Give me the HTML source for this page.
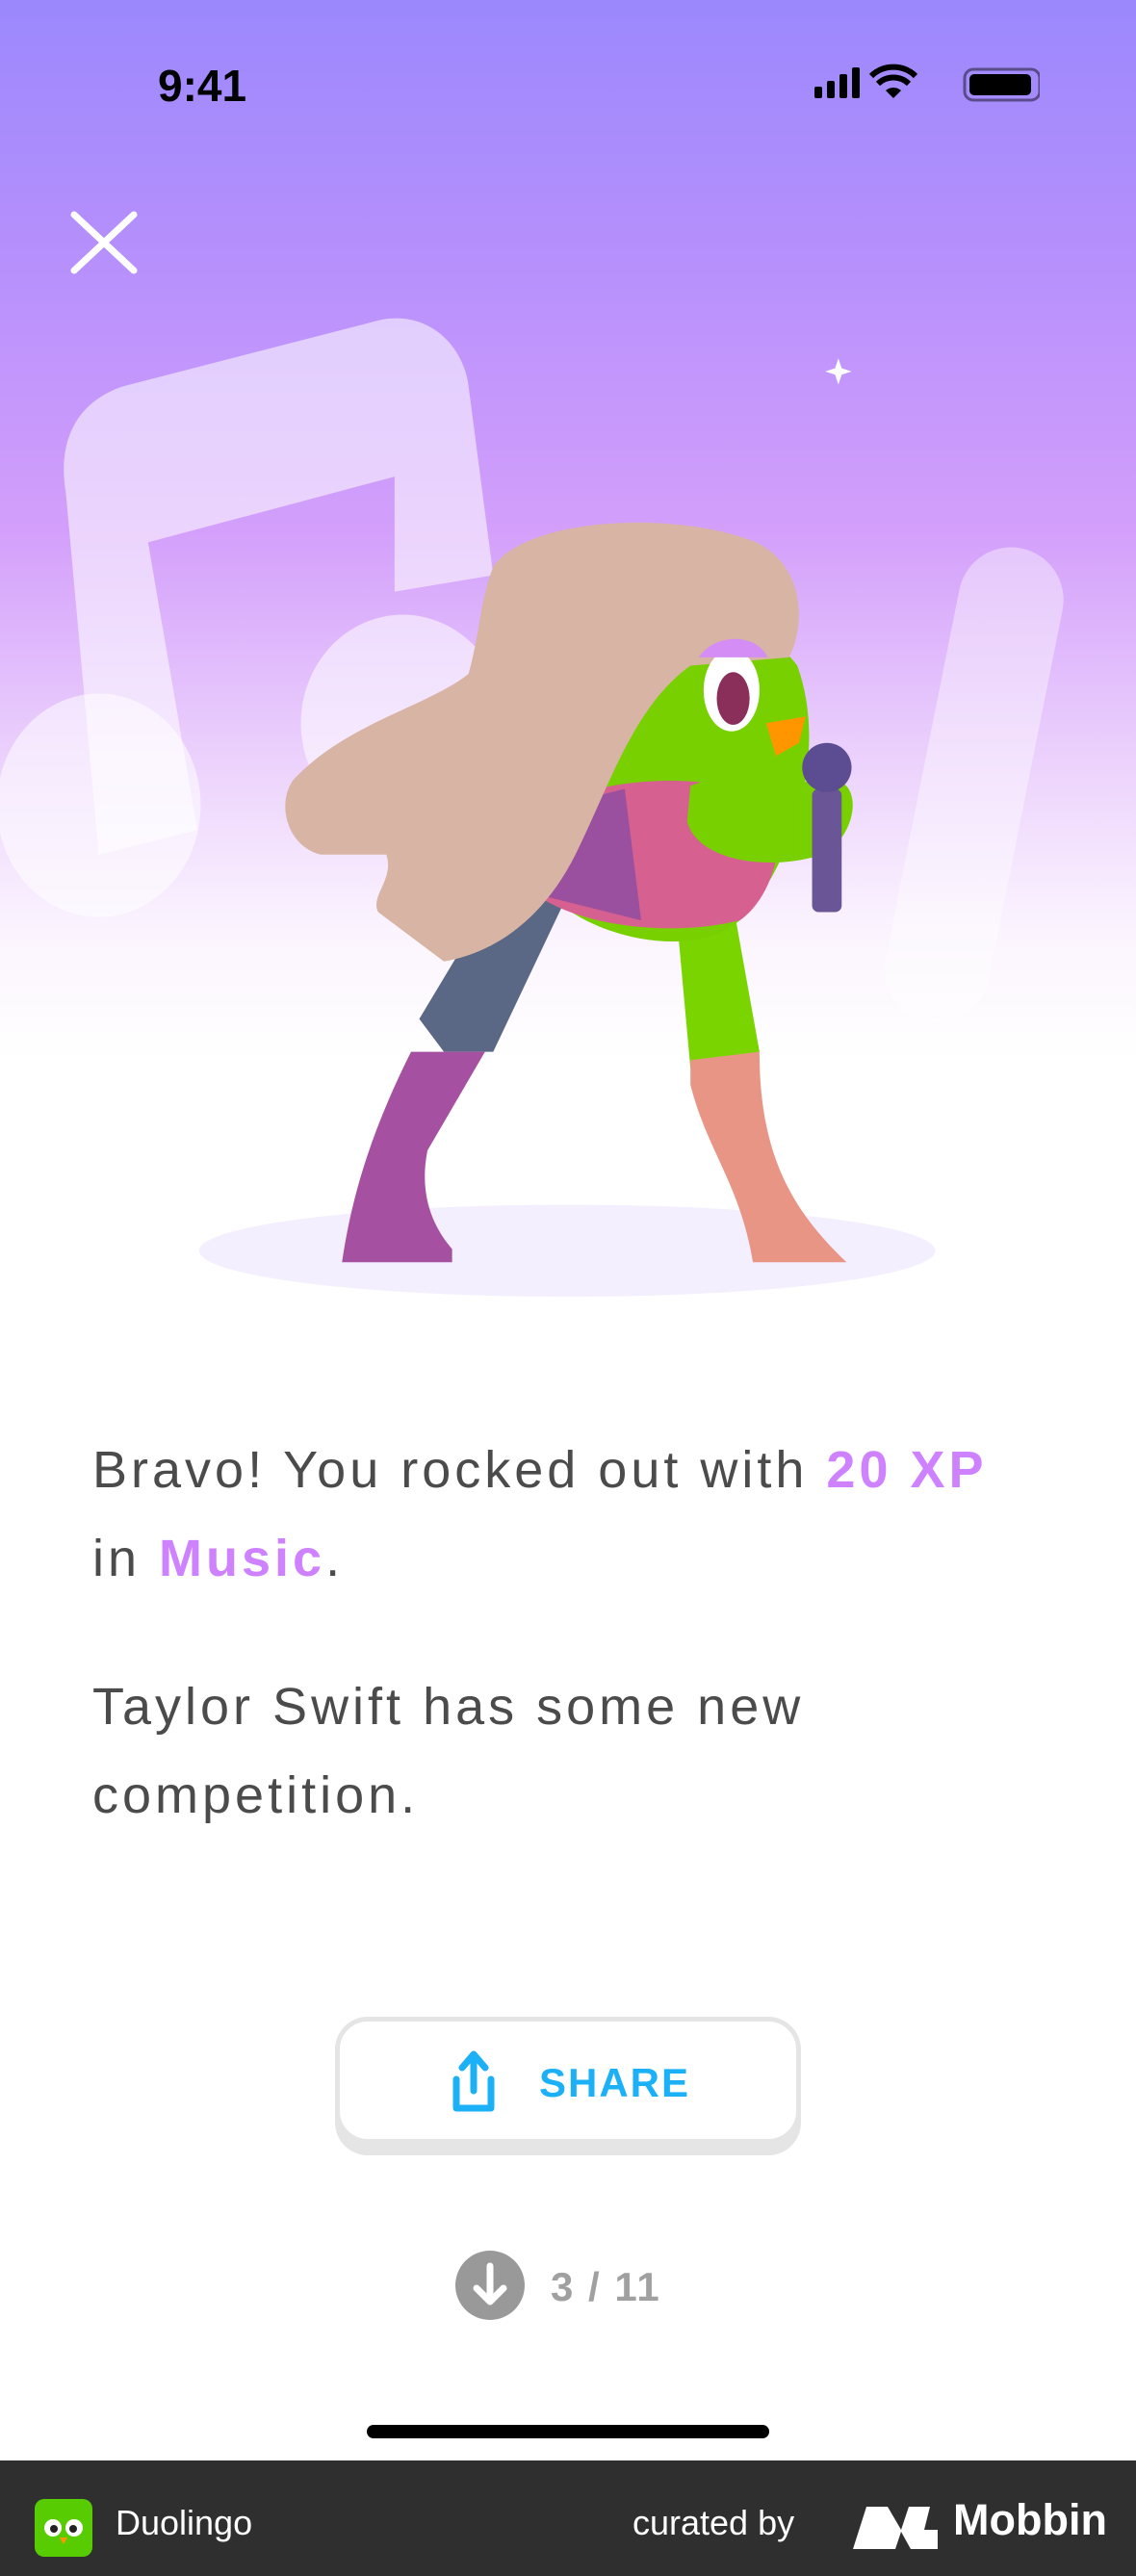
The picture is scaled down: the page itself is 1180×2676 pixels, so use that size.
<!DOCTYPE html>
<html><head><meta charset="utf-8"><style>
*{margin:0;padding:0;box-sizing:border-box}
html,body{width:1180px;height:2676px;overflow:hidden;background:#fff;font-family:"Liberation Sans",sans-serif}
.bg{position:absolute;left:0;top:0;width:1180px;height:1100px;background:linear-gradient(180deg,#9b88fd 0%,#b790fc 25%,#d39ffb 50%,#ecd2fc 72%,#fbf4fe 88%,#ffffff 100%)}
.abs{position:absolute}
.t{position:absolute;left:96px;font-size:54px;letter-spacing:4px;color:#4b4b4b;white-space:nowrap;line-height:1}
.b{color:#ce82ff;font-weight:bold}
</style></head><body>
<div class="bg"></div>
<div class="abs" style="left:164px;top:62px;font-size:46px;font-weight:bold;color:#000">9:41</div>
<svg class="abs" style="left:840px;top:66px" width="240" height="44" viewBox="0 0 240 44">
<rect x="6" y="24" width="8" height="12" rx="2" fill="#000"/><rect x="19" y="18" width="8" height="18" rx="2" fill="#000"/><rect x="32" y="11" width="8" height="25" rx="2" fill="#000"/><rect x="45" y="4" width="8" height="32" rx="2" fill="#000"/>
<path d="M88 36 L80 28 A12 12 0 0 1 96 28 Z" fill="#000"/><path d="M72 21 A23 23 0 0 1 104 21" stroke="#000" stroke-width="6" fill="none"/><path d="M65 13 A33 33 0 0 1 111 13" stroke="#000" stroke-width="6" fill="none"/>
<rect x="162" y="6" width="78" height="32" rx="9" fill="none" stroke="#000" stroke-opacity=".45" stroke-width="3"/><rect x="167" y="11" width="64" height="22" rx="5" fill="#000"/>
</svg>
<svg class="abs" style="left:73px;top:219px" width="70" height="66"><path d="M4 4 L66 62 M66 4 L4 62" stroke="#fff" stroke-width="7" stroke-linecap="round"/></svg>
<svg class="abs" style="left:0;top:0" width="1180" height="1400" viewBox="0 0 691 820">
<g fill="#fff" fill-opacity=".55">
<path d="M40 300 C35 270 45 245 75 235 L230 195 C260 188 282 210 285 235 L300 350 L240 360 L240 290 L90 330 L120 505 L60 520 Z"/>
<ellipse cx="60" cy="490" rx="62" ry="68"/>
<ellipse cx="245" cy="440" rx="62" ry="66"/>
</g>
<path d="M615 365 L570 590" stroke="#fff" stroke-opacity=".4" stroke-width="64" stroke-linecap="round"/>
<path d="M510 218 L512 224 L518 226 L512 228 L510 234 L508 228 L502 226 L508 224 Z" fill="#fff"/>
<ellipse cx="345" cy="761" rx="224" ry="28" fill="#f4effe"/>
<path d="M345 545 L300 640 L270 640 L255 620 L300 545 Z" fill="#5a6785"/>
<path d="M250 640 L295 640 L260 700 C255 725 262 745 275 760 L275 768 L208 768 C215 720 230 680 250 640Z" fill="#a550a0"/>
<path d="M410 540 L445 545 L462 640 L420 650 Z" fill="#7ad400"/>
<path d="M420 645 L462 640 C462 700 480 735 515 768 L458 768 C450 720 430 700 420 660Z" fill="#e89585"/>
<path d="M380 420 C395 380 460 370 485 405 C505 460 480 530 450 560 C420 585 360 570 335 545 C330 500 350 450 380 420Z" fill="#79d000"/>
<path d="M330 490 C380 470 440 470 470 490 C480 520 465 550 450 560 C410 570 350 565 320 540 Z" fill="#d6608f"/>
<path d="M320 495 L380 480 L390 560 L330 545 Z" fill="#9b4f9f"/>
<path d="M300 345 C320 315 410 310 460 330 C490 345 490 380 480 400 L420 405 C385 430 370 480 350 520 C330 560 300 580 270 585 L230 555 C225 545 240 535 235 520 L195 520 C175 515 168 490 178 475 C210 440 260 430 285 410 C292 385 292 365 300 345Z" fill="#d7b4a4"/>
<ellipse cx="445" cy="420" rx="17" ry="25" fill="#fff"/><ellipse cx="446" cy="425" rx="10" ry="16" fill="#8a2e5a"/>
<path d="M425 400 C435 385 460 385 467 400 Z" fill="#d38df5"/>
<path d="M466 440 L490 436 L486 452 L472 460 Z" fill="#ff9600"/>
<path d="M420 478 C440 470 470 478 510 475 C525 480 520 510 500 520 C470 530 425 525 418 500Z" fill="#78d000"/>
<rect x="494" y="480" width="18" height="75" rx="4" fill="#6a5596"/>
<circle cx="503" cy="467" r="15" fill="#5c4c92"/>
</svg>
<div class="t" style="top:1500px">Bravo! You rocked out with <span class="b">20 XP</span></div>
<div class="t" style="top:1592px">in <span class="b">Music</span>.</div>
<div class="t" style="top:1746px">Taylor Swift has some new</div>
<div class="t" style="top:1838px">competition.</div>
<div class="abs" style="left:348px;top:2095px;width:484px;height:144px;border-radius:34px;background:#e5e5e5"></div>
<div class="abs" style="left:350px;top:2097px;width:480px;height:128px;border-radius:32px;background:#fff;border:3px solid #e5e5e5"></div>
<svg class="abs" style="left:464px;top:2122px" width="56" height="80" viewBox="0 0 56 80"><path d="M28 50 V14 M16 26 L28 12 L40 26" stroke="#1cb0f6" stroke-width="7" fill="none" stroke-linecap="round" stroke-linejoin="round"/><path d="M10 38 V68 H46 V38" stroke="#1cb0f6" stroke-width="7" fill="none" stroke-linecap="round" stroke-linejoin="round"/></svg>
<div class="abs" style="left:560px;top:2140px;font-size:42px;font-weight:bold;color:#1cb0f6;letter-spacing:2px">SHARE</div>
<svg class="abs" style="left:473px;top:2338px" width="72" height="72"><circle cx="36" cy="36" r="36" fill="#999"/><path d="M36 16 V52 M22 39 L36 53 L50 39" stroke="#fff" stroke-width="7" fill="none" stroke-linecap="round" stroke-linejoin="round"/></svg>
<div class="abs" style="left:572px;top:2352px;font-size:42px;font-weight:bold;color:#a0a0a0;letter-spacing:2px">3 / 11</div>
<div class="abs" style="left:381px;top:2519px;width:418px;height:14px;border-radius:7px;background:#000"></div>
<div class="abs" style="left:0;top:2556px;width:1180px;height:120px;background:#2f2f2f"></div>
<svg class="abs" style="left:36px;top:2596px" width="60" height="60"><rect width="60" height="60" rx="10" fill="#58cc02"/><circle cx="19" cy="30" r="9" fill="#fff"/><circle cx="41" cy="30" r="9" fill="#fff"/><circle cx="20" cy="31" r="4" fill="#222"/><circle cx="40" cy="31" r="4" fill="#222"/><path d="M26 40 L34 40 L30 47Z" fill="#ff9600"/></svg>
<div class="abs" style="left:120px;top:2600px;font-size:36px;color:#fff">Duolingo</div>
<div class="abs" style="left:657px;top:2600px;font-size:36px;color:#fff">curated by</div>
<svg class="abs" style="left:886px;top:2600px" width="88" height="48"><path d="M0 48 L14 4 H36 L50 28 L58 4 H80 L74 28 H88 V48 H60 L50 30 L44 48 Z" fill="#fff"/></svg>
<div class="abs" style="left:990px;top:2592px;font-size:45px;font-weight:bold;color:#fff">Mobbin</div>
</body></html>
